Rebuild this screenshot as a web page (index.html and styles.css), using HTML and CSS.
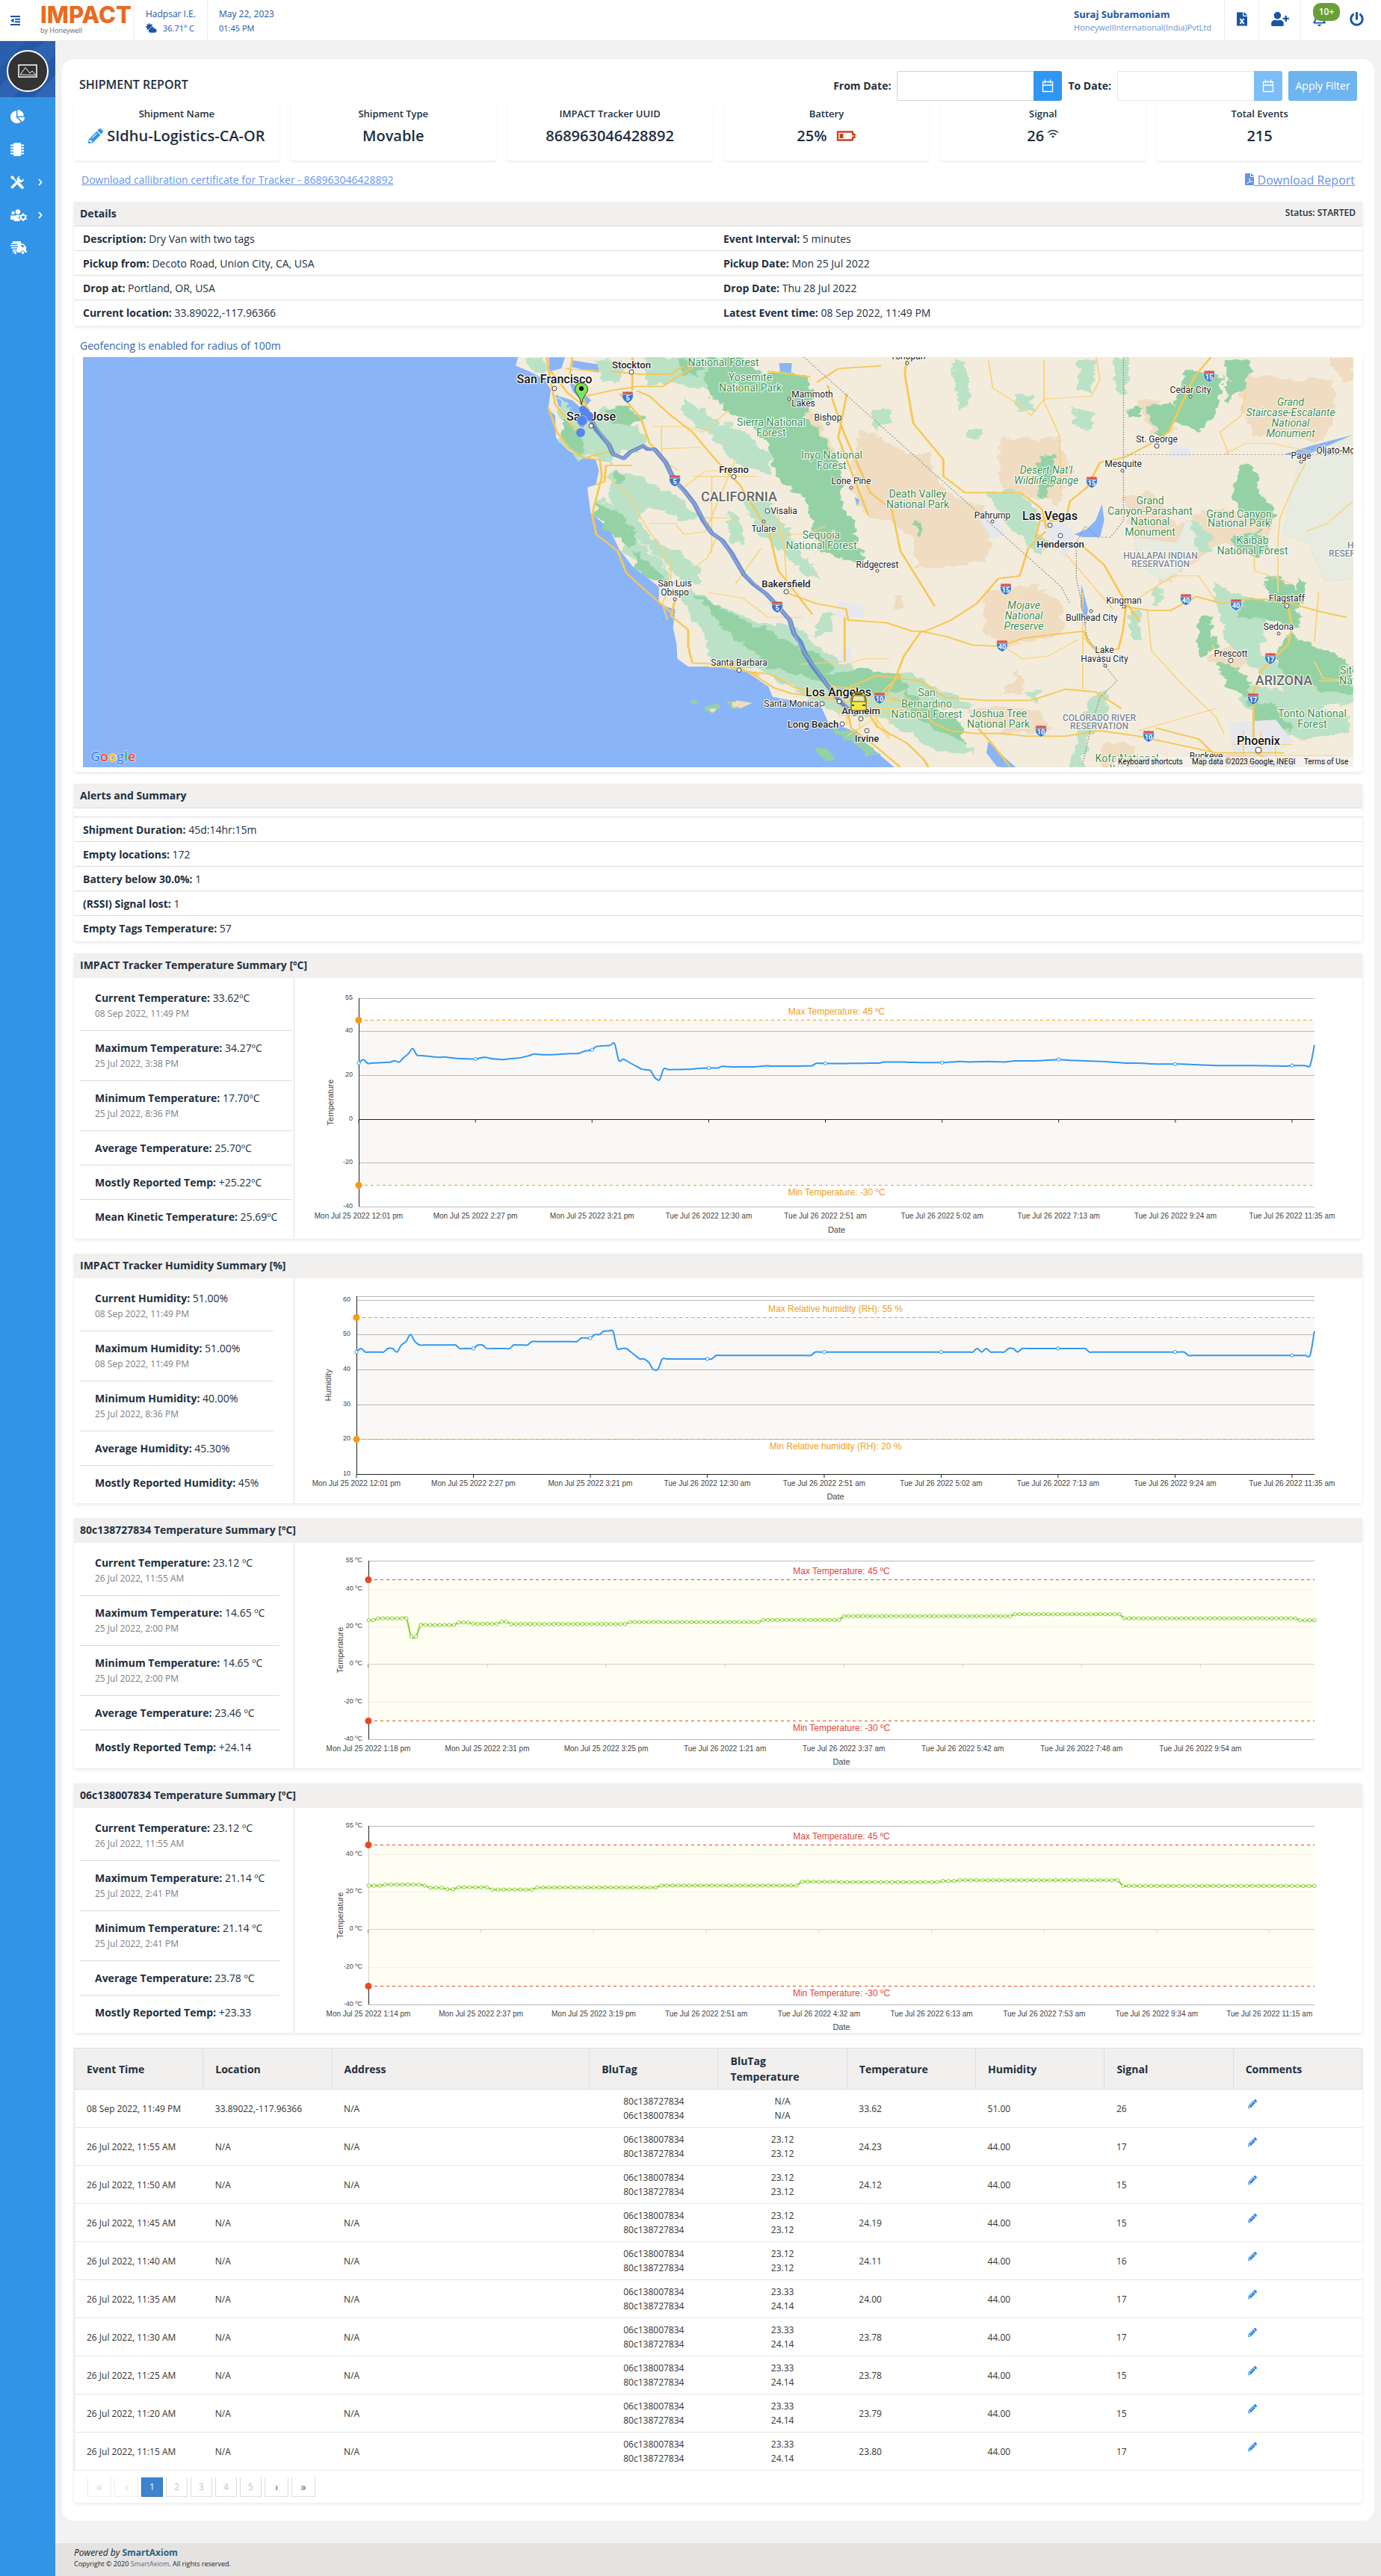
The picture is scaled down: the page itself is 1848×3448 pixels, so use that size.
FILE: index.html
```html
<!DOCTYPE html>
<html lang="en">
<head>
<meta charset="utf-8">
<meta name="viewport" content="width=device-width, initial-scale=1">
<title>Shipment Report</title>
<link rel="stylesheet" href="styles.css">
</head>
<body>
<svg class="sprite" aria-hidden="true">
  <symbol id="i-pencil" viewBox="0 0 512 512"><path d="M497.9 142.1l-46.1 46.1c-4.7 4.7-12.3 4.7-17 0l-111-111c-4.7-4.7-4.7-12.3 0-17l46.1-46.1c18.7-18.7 49.1-18.7 67.9 0l60.1 60.1c18.8 18.7 18.8 49.1 0 67.9zM284.2 99.8L21.6 362.4.4 483.9c-2.9 16.4 11.4 30.6 27.8 27.8l121.5-21.3 262.6-262.6c4.7-4.7 4.7-12.3 0-17l-111-111c-4.8-4.7-12.4-4.7-17.1 0zM124.1 339.9c-5.5-5.5-5.5-14.3 0-19.8l154-154c5.5-5.5 14.3-5.5 19.8 0s5.5 14.3 0 19.8l-154 154c-5.5 5.5-14.3 5.5-19.8 0zM88 424h48v36.3l-64.5 11.3-31.1-31.1L51.7 376H88v48z"/></symbol>
  <symbol id="i-file" viewBox="0 0 384 512"><path d="M224 136V0H24C10.700 0 0 10.700 0 24v464c0 13.300 10.700 24 24 24h336c13.300 0 24-10.700 24-24V160H248c-13.200 0-24-10.800-24-24zM384 121.900v6.100H256V0h6.100c6.400 0 12.500 2.500 17 7l97.900 98c4.500 4.500 7 10.600 7 16.900z"/></symbol>
  <symbol id="i-calendar" viewBox="0 0 16 18"><path d="M1.500 3.500h13v13h-13zM1.500 8h13M4.500 1v4M11.500 1v4" fill="none" stroke="currentColor" stroke-width="1.300" stroke-linecap="round" stroke-linejoin="round"/></symbol>
  <symbol id="i-chevron" viewBox="0 0 6 10"><path d="M1 1l3.500 4L1 9" fill="none" stroke="currentColor" stroke-width="1.800"/></symbol>
  <symbol id="i-shield" viewBox="0 0 16 17"><path d="M2 1q3 1 6 0q3 1 6 0q1 2 1.500 4h-15Q1 3 2 1z" fill="#d5544f"/><path d="M.5 5h15q.5 8-7.500 11.500Q0 13 .5 5z" fill="#3c78c8" stroke="#fff" stroke-width=".6"/></symbol>
</svg>

<header class="topbar">
  <button class="menu-btn" aria-label="Toggle menu">
    <svg width="13" height="13" viewBox="0 0 13 13"><path d="M0 1h13M6 4.700h7M6 8.300h7M0 12h13" stroke="#1a56a8" stroke-width="2"/><path d="M4.500 3.500v6L0 6.500z" fill="#1a56a8"/></svg>
  </button>
  <a class="logo" href="#"><span class="logo-name">IMPACT</span><span class="logo-by">by Honeywell</span></a>
  <div class="top-cell weather">
    <div>Hadpsar I.E.</div>
    <div class="small"><svg class="sun" width="15" height="13" viewBox="0 0 15 13"><circle cx="5" cy="5" r="3.500" fill="#1a56a8"/><path d="M5 0v10M0 5h10M1.500 1.500l7 7M8.500 1.500l-7 7" stroke="#1a56a8" stroke-width="1.300"/><path d="M6 13a3 3 0 0 1-.5-5.800 3.300 3.300 0 0 1 6.200-.3A3 3 0 0 1 12 13z" fill="#1a56a8" stroke="#fff" stroke-width=".6"/></svg>36.71º C</div>
  </div>
  <div class="top-cell date">
    <div>May 22, 2023</div>
    <div class="small">01:45 PM</div>
  </div>
  <div class="user">
    <div class="user-name">Suraj Subramoniam</div>
    <div class="user-org">HoneywellInternational(India)PvtLtd</div>
  </div>
  <a class="top-icon" href="#" aria-label="Export to Excel"><svg width="14" height="19" viewBox="0 0 384 512"><use href="#i-file"/><path d="M120 240l140 190M260 240L120 430" stroke="#fff" stroke-width="50"/></svg></a>
  <a class="top-icon wide" href="#" aria-label="Add user"><svg width="24" height="19" viewBox="0 0 640 512"><path d="M624 208h-64v-64c0-8.800-7.200-16-16-16h-32c-8.800 0-16 7.200-16 16v64h-64c-8.800 0-16 7.200-16 16v32c0 8.800 7.200 16 16 16h64v64c0 8.800 7.200 16 16 16h32c8.800 0 16-7.200 16-16v-64h64c8.800 0 16-7.200 16-16v-32c0-8.800-7.200-16-16-16zm-400 48c70.700 0 128-57.300 128-128S294.700 0 224 0 96 57.300 96 128s57.300 128 128 128zm89.600 32h-16.700c-22.200 10.200-46.900 16-72.900 16s-50.600-5.800-72.900-16h-16.700C60.200 288 0 348.200 0 422.400V464c0 26.500 21.500 48 48 48h352c26.500 0 48-21.500 48-48v-41.600c0-74.200-60.200-134.400-134.400-134.400z"/></svg></a>
  <a class="top-icon bell" href="#" aria-label="Notifications"><svg width="17" height="19" viewBox="0 0 448 512"><path d="M439.390 362.290c-19.320-20.760-55.470-51.990-55.470-154.290 0-77.700-54.480-139.900-127.940-155.160V32c0-17.670-14.320-32-31.980-32s-31.980 14.330-31.980 32v20.840C118.560 68.100 64.080 130.300 64.080 208c0 102.300-36.150 133.530-55.470 154.290-6 6.450-8.660 14.160-8.610 21.710.11 16.400 12.980 32 32.100 32h383.800c19.120 0 32-15.600 32.100-32 .05-7.550-2.610-15.270-8.610-21.710zM67.530 368c21.220-27.970 44.420-74.330 44.530-159.420 0-.2-.06-.38-.06-.58 0-61.860 50.140-112 112-112s112 50.140 112 112c0 .2-.06.38-.06.58.11 85.100 23.310 131.460 44.530 159.420H67.530zM224 512c35.320 0 63.970-28.650 63.970-64H160.030c0 35.350 28.650 64 63.970 64z"/></svg><span class="badge">10+</span></a>
  <a class="top-icon power" href="#" aria-label="Log out"><svg width="19" height="19" viewBox="0 0 512 512"><path d="M400 54.100c63 45 104 118.600 104 201.900 0 136.800-110.800 247.700-247.500 248C120 504.300 8.200 393 8 256.400 7.900 173.100 48.900 99.300 111.800 54.200c11.700-8.300 28-4.800 35 7.700L162.600 90c5.900 10.500 3.100 23.800-6.600 31-41.500 30.800-68 79.600-68 134.900-.1 92.300 74.500 168.100 168 168.100 91.600 0 168.600-74.200 168-169.100-.3-51.800-24.700-101.800-68.100-134-9.700-7.200-12.400-20.500-6.500-30.900l15.800-28.100c7-12.400 23.200-16.100 34.800-7.800zM296 264V24c0-13.300-10.700-24-24-24h-32c-13.300 0-24 10.700-24 24v240c0 13.300 10.700 24 24 24h32c13.300 0 24-10.700 24-24z"/></svg></a>
</header>

<div class="shell">
  <nav class="sidebar" aria-label="Main">
    <div class="avatar-box"><div class="avatar">
      <svg width="26" height="18" viewBox="0 0 26 18" fill="none" stroke="#fff"><path d="M1 1h24v16H1z" stroke-width="1.500"/><path d="M3 14l7-9.500 6 7.500 3-3 5 5.500z"/></svg>
    </div></div>
    <a class="side-link" href="#" aria-label="Dashboard"><svg width="19" height="18" viewBox="0 0 544 512"><path d="M527.790 288H290.500l158.030 158.030c6.040 6.040 15.980 6.530 22.190.68 38.700-36.460 65.320-85.610 73.130-140.860 1.340-9.460-6.510-17.850-16.060-17.850zm-15.830-64.800C503.720 103.740 408.260 8.280 288.800.04 279.680-.59 272 7.100 272 16.240V240h223.770c9.140 0 16.820-7.680 16.190-16.800zM224 288V50.710c0-9.550-8.390-17.400-17.840-16.060C86.990 51.490-4.100 155.600.14 280.370 4.500 408.510 114.830 513.590 243.030 511.980c50.400-.63 96.970-16.870 135.260-44.030 7.900-5.600 8.420-17.230 1.570-24.080L224 288z"/></svg></a>
    <a class="side-link" href="#" aria-label="Devices"><svg width="18" height="18" viewBox="0 0 18 18"><rect x="4" y="0" width="10" height="18" rx="1.500"/><path d="M0 3.500h18M0 7.200h18M0 10.800h18M0 14.500h18" stroke="#fff" stroke-width="2"/></svg></a>
    <a class="side-link" href="#" aria-label="Tools"><svg width="18" height="18" viewBox="0 0 18 18"><path d="M2.500 15.500L12 6" stroke="#fff" stroke-width="3.600" stroke-linecap="round"/><path d="M17.600 4.200A4.500 4.500 0 1 1 13 .4L11.300 3l.7 3 3 .6z"/><path d="M0 2l2.200-2L5 2.300l.3 1.700 4.200 4.200-1.300 1.300L4 5.200 2.300 5z"/><path d="M11.500 11.500l4.300 4.300" stroke="#fff" stroke-width="4" stroke-linecap="round"/></svg><svg class="chev" width="6" height="10"><use href="#i-chevron"/></svg></a>
    <a class="side-link" href="#" aria-label="Users"><svg width="22" height="16" viewBox="0 0 22 16"><circle cx="3.500" cy="5" r="2.200"/><circle cx="10" cy="3.500" r="3.300"/><path d="M0 8.500h5.500L4 14H0zM4.500 16v-3.500C4.500 9 7 7.800 9 7.800h3l-1 4 2 4.200z"/><circle cx="17" cy="10.800" r="3.200" fill="none" stroke="#fff" stroke-width="2.200"/><path d="M17 5.500v2M17 14v2M12.300 8.200l1.700 1M20 12.500l1.700 1M21.700 8.200l-1.700 1M14 12.500l-1.700 1" stroke="#fff" stroke-width="1.800"/></svg><svg class="chev" width="6" height="10"><use href="#i-chevron"/></svg></a>
    <a class="side-link" href="#" aria-label="Shipments"><svg width="22" height="18" viewBox="0 0 22 18"><path d="M3 0h11v3h3l4 4.500V13h1v2H3v-4h6V9.500H1V8h9V6.500H0V5h9V3.500H1V2h2z"/><path d="M14.500 4.500v3.300h4.500l-2.600-3.300z" fill="#3294e6"/><circle cx="6.500" cy="15" r="2.400" stroke="#3294e6"/><circle cx="16.500" cy="15" r="2.400" stroke="#3294e6"/></svg></a>
  </nav>

  <div class="content">
    <main class="panel">
      <form class="filters" onsubmit="return false">
        <h1>SHIPMENT REPORT</h1>
        <label for="from">From Date:</label>
        <div class="date-field"><input id="from" type="text"><button type="button" aria-label="Choose from date"><svg width="16" height="18"><use href="#i-calendar"/></svg></button></div>
        <label for="to">To Date:</label>
        <div class="date-field disabled"><input id="to" type="text" disabled><button type="button" aria-label="Choose to date" disabled><svg width="16" height="18"><use href="#i-calendar"/></svg></button></div>
        <button class="apply" type="submit" disabled>Apply Filter</button>
      </form>

      <section class="stats">
        <div class="stat"><h2>Shipment Name</h2><p><svg class="edit-lg" width="20" height="20"><use href="#i-pencil"/></svg>SIdhu-Logistics-CA-OR</p></div>
        <div class="stat"><h2>Shipment Type</h2><p>Movable</p></div>
        <div class="stat"><h2>IMPACT Tracker UUID</h2><p>868963046428892</p></div>
        <div class="stat"><h2>Battery</h2><p>25%<svg class="battery" width="26" height="14" viewBox="0 0 26 14"><path d="M2 1.500h20v3.500h2.500v4H22v3.500H2z" fill="none" stroke="#c9411f" stroke-width="2.400" stroke-linejoin="round"/><rect x="4.500" y="4" width="5" height="6" fill="#c9411f"/></svg></p></div>
        <div class="stat"><h2>Signal</h2><p>26<svg class="wifi" width="16" height="12" viewBox="0 0 16 12"><path d="M1 4.500q7-6 14 0M3.800 7.300q4.200-3.500 8.400 0" fill="none" stroke="#212f3f" stroke-width="1.500"/><circle cx="8" cy="10" r="1.400" fill="#212f3f"/></svg></p></div>
        <div class="stat"><h2>Total Events</h2><p>215</p></div>
      </section>

      <div class="links">
        <a href="#">Download callibration certificate for Tracker - 868963046428892</a>
        <a class="report" href="#"><svg width="12" height="16" viewBox="0 0 384 512"><use href="#i-file"/><path d="M90 430C200 370 210 300 190 220c0 90 50 130 120 140-80-10-150 20-220 70z" fill="none" stroke="#fff" stroke-width="26"/></svg> Download Report</a>
      </div>

      <section class="card">
        <h2 class="card-head">Details <span class="status">Status: STARTED</span></h2>
        <div class="detail-row"><p><b>Description:</b> Dry Van with two tags</p><p><b>Event Interval:</b> 5 minutes</p></div>
        <div class="detail-row"><p><b>Pickup from:</b> Decoto Road, Union City, CA, USA</p><p><b>Pickup Date:</b> Mon 25 Jul 2022</p></div>
        <div class="detail-row"><p><b>Drop at:</b> Portland, OR, USA</p><p><b>Drop Date:</b> Thu 28 Jul 2022</p></div>
        <div class="detail-row"><p><b>Current location:</b> 33.89022,-117.96366</p><p><b>Latest Event time:</b> 08 Sep 2022, 11:49 PM</p></div>
      </section>

      <p class="geofence">Geofencing is enabled for radius of 100m</p>
      <section class="card map-card">
        <svg class="map" viewBox="0 0 1700 549" role="img" aria-label="Route map">
          <defs><filter id="terrain" x="0" y="0" width="100%" height="100%"><feTurbulence type="fractalNoise" baseFrequency="0.035" numOctaves="3" seed="4"/><feDisplacementMap in="SourceGraphic" scale="34" xChannelSelector="R" yChannelSelector="G"/></filter></defs>
          <rect width="1700" height="549" fill="#8ab4f8"/>
          <g transform="translate(-11 -18) scale(.574 .37)">
            <path fill="#f3ecdd" d="M1035 40L1028 80 1060 100 1095 130 1110 165 1104 235 1120 260 1122 340 1150 385 1180 412 1215 420 1222 460 1215 510 1195 520 1203 615 1245 665 1270 745 1300 805 1350 865 1362 880 1362 940 1385 955 1400 960 1395 1030 1403 1085 1405 1140 1430 1168 1500 1168 1567 1188 1617 1240 1627 1278 1687 1295 1739 1310 1757 1370 1807 1395 1852 1455 1920 1545H3000V40z"/>
            <g fill="#8ab4f8"><path d="M1105 49h38l-8 40-28 12zM1120 185l40 20 30 40-12 40-50-60zM1160 60l80 20-20 25-60-20zM1150 130l24 30 30 45-12 20-30-50z"/></g>
            <!-- reserves, bases and desert parks -->
            <g fill="#efdcc1" filter="url(#terrain)">
              <path d="M1830 300l60 50 50 50h58v70l60 90 60 30 20 80-20 120-90 20h-70v-100l-50-60-60-20-40-110z"/>
              <path d="M2155 342h140l30 120-30 120-60-30-80-30zM2120 900l90-20 30-10 60 80v100l-80 30-60 20-40-60zM2200 1180l20 90-60 0zM2080 1330l60-20 110 20 30 70-110 10-60-40z"/>
              <path d="M2720 110l120 20 80 0 20 80-30 140-160-20-30-90zM2440 560l70-20 60 120 60-60 60 0 100 60-20 100-60-30-50 0-80 90-60-10-40-80zM2480 210l50-10 40 120-60 10zM2700 1080l60 30-40 70-80-40zM2780 1240l80 60 40 80-40 60-80-80zM1650 180l60 40 60 160 20 180-30-20-60-160-40-90zM2390 1450l80 0 0 90-80 0zM2520 820l30-30 20 60-40 20z"/>
              <path d="M2930 50h52v80l-30 10zM2125 600l20 80-20 80-10-20zM1910 910l20 0 0 50-20 0zM2620 1520l80-40 60 10 20 55h-140z"/>
            </g>
            <g fill="#e8ebe0" stroke="#cfdcd2">
              <path d="M2850 450l60-90 75-20v510l-70 10-40-140-60-30zM2470 700l100 20 20-80 40 10-10 120-80 90-60-60z"/>
            </g>
            <!-- forest and park land -->
            <g fill="#bbe2c6" filter="url(#terrain)">
              <path d="M1050 49h45l12 70-40-28-20-20zM1125 185l30 60 30 60 50-80 60 40 40 90-20 40-40-10-30 50-40-40-30 30-40-60 2-80z"/>
              <path d="M1215 60h60v80h-40zM1330 49h180l60 40v180l-40-40-50-60-90-30-60 20zM1420 200l60 60 80 60 60 90v60l-80-40-60-100-60-60z"/>
              <path d="M1250 460l50 0 60 60 60 50 30 60-30 10-70-50-40 20 30 90 70 60 50 60 0 60-50-30-60-90-60-90-50-110z"/>
              <path d="M1222 560l50 50 40 100 60 90 30 70-20 10-60-70-40-60-25-80-38-50z"/>
              <path d="M1400 890l40 0 60 60 80 50 90 40 60 60 80 60 60 60 90 20-40 60-100-20-60-20-60-60-110-20-80-20-30-10-6-90z"/>
              <path d="M1560 560l60 10 40 100 50 120 30 60-30-10-60-90-60-60zM1595 1165l160 25 170 0 60 90 40 60 70 140h-90l-60-70-80-60-90-20-60-40z"/>
              <path d="M1520 600l30 20 10 110-30-20zM1640 1010l50 20 40 80-40 20-60-50zM1890 1200l60-10 60 60 90 50-20 30-100-20z"/>
              <path d="M2130 540l60-10 60 70-10 60 30 70-20 30-50-60-40-70zM2050 60l20 0 15 80 0 70-20 40-12-90zM2190 180l50 0-10 60-30 10zM2080 310l40-5-10 35-30 0zM2320 230l60 20-10 60-30 0zM2340 60l40 0-10 120-30-20zM2420 49h40l-10 130-20 0z"/>
              <path d="M2370 1270l40-20-10 100-40 80-10 110h-30l20-140zM2460 960l25 0 0 120-25 0zM2520 870l20 20-10 60-20 0zM1855 240l50-5-10 60-30 20zM2225 1260l30-10-10 60zM1740 980l30 0-10 60-30 20z"/>
              <path d="M2600 640l40 30 10 80-30 0zM2650 860l80 60 60 60-30 130 50 60 180 60v60l-130 40-50-90-60-60-60-90zM2750 1230l80 40 140 80v60l-120 20-80-60-60-90z"/>
            </g>
            <g fill="#94d2a5" filter="url(#terrain)">
              <path d="M1480 49l80 0 50 60 40-20 60 40 10 60-20 70 40 60 30 90 20 80 0 90 30 100 20 110-40-10-60-20-20-110-20-90-50-60-30-90-20-80-50-60-60-60-30-80z"/>
              <path d="M1135 270l20 10 30 60 5 60-20 5-35-65zM1218 570l50 40 45 90-20 40-20-20-60-95zM1300 745l45 60 45 60-15 10-65-60zM1440 900l60 50 70 60 60 30 40 40 70 50 30 40-20 50-120-40-60-80-60-70z"/>
              <path d="M1240 240l50-20 30 50-20 30-50-10zM1255 460l30 10-5 35-20-5zM1410 50l50 30-10 40-30-10zM1650 300l20 60 30 40-30 0zM1610 300l40 80 20 90-30-20z"/>
              <path d="M1740 1205l80-30 110 20 10 60-60 10-100-10zM1930 1250l60 60 70 60 20 80-60-40-80-80zM1740 1375l80 30 60 90-30-10z"/>
              <path d="M2240 470l20-70 25-5-5 120-20 50-15-20zM1960 640l10 0 5 40-5 20-10-10z"/>
              <path d="M2500 220l60-10 10 60-30 80-30-60zM2600 90l80 30-20 140-40 60-60-40 10-90zM2685 60h60l-20 110-40 40zM2455 240l30-10 0 40-30 0z"/>
              <path d="M2720 440l30 0 10 90 40 90-20 60-60-60-20-80zM2700 700l60-20 30 60-30 30-50-20z"/>
              <path d="M2775 850l40-5 40 60 0 120-60-20-90-20 30-60 50 0zM2620 980l30 0 10 110-30 50-20-40zM2830 1050l90 60 60 60v100l-70-10-90-60-20-60zM2665 1150l50 20 30 60-10 50-50-40zM2740 1290l60 20 40 80-30 20-60-60zM2850 850l20 10-5 80-20-20z"/>
            </g>
            <g fill="#e6e8ee"><path d="M2110 640l40-10 20 60-30 20zM2240 640l60-10 30 60-20 90-30-60zM1780 930l60 20 0 40-60 0zM2690 1370l110-10 40 80-60 60-80-20zM1790 1100l20 0 0 60-30 0zM2560 360l40 20 0 30-50 0z"/></g>
            <g fill="#8ab4f8"><path d="M2395 580l5 60-10 60-40 0-20-10 30-20 20-30zM2347 870l15 90-5 60-12-70zM1642 70l30 0-2 36-26-10zM1818 555l12 10-6 24zM2130 1440l40 60 30 40-50-10-25-50zM2820 400l60-30 100-40-60 40-60 40z"/></g>
            <g fill="#94d2a5"><path d="M1433 1295l10-8 12 14-10 4zM1468 1315l30-15 8 15-20 22-18-10zM1518 1287l12 8 38-2-10 25-25 4zM1725 1460l30 5 18 40-20 5-20-25z"/><path fill="#efdcc1" d="M1478 1322l14-4 4 8-10 10zM1532 1296l18 0 0 16-16 4zM1540 1290l40 10-30 20z"/></g>
            <!-- minor roads -->
            <g fill="none" stroke="#fbd277" stroke-width="3">
              <path d="M1240 480l50 70 30 80 20 50 30 70 20 50 0 60-20 80 12 60"/>
              <path d="M1340 650l60 0 20 40 50-10 70-260M1395 810l50 0 30-35 20-70M1420 520l50-60 70 0M1345 300l80 0 40 20 60-80M1370 380l90-5M1368 300l0 120 40 40M1485 480v280M1440 480h150M1460 630h90M1640 620l15 130 5 130"/>
              <path d="M2130 60l10 100 60 60 30 40 30-60 110-10 20-60-10-90M2260 60l0 150 35 120 5 200M1620 690h80l50-30M1600 740l-60 130M1477 900l80 20 60 70h80M1790 1150l-100 10"/>
              <path d="M2310 760l110 200M2500 960l10 150 70 120 80 120 20 60M2440 960l60-60 60-60 60 0 40 90M2870 430l-30 90-30 110-5 80 0 190M2870 680l50-30 60-80M2680 400l50-40 60 0 90 30M2730 170l-10 90-50 60 20 80M2650 1090l20 40M2350 1250v-350M2350 1060l40 70M2160 1090l50 50 60-10 70-60M1900 1140h-60l-60 30M2480 1400l180-80M2900 1220l80 0M2900 900l-10 180M2890 1150l20 60 60 10M2750 760v60l90 50"/>
              <path d="M1750 1215l70 100 100 30M1800 1420l60-60 40 70M1770 1240l60 10 30 90 40 80M1760 1290h190M1770 1320h170M1800 1260v120M1830 1260v140M1870 1260v120M1900 1270v110M1780 1345h140M2680 1490h260M2700 1450h140M2725 1400v130M2765 1400v130M2800 1420v110M1950 1290l-30-30M1930 1190l-60 90"/>
            </g>
            <!-- highways -->
            <g fill="none" stroke="#f8c754" stroke-width="5" stroke-linejoin="round">
              <path d="M1100 49l10 90 10 80 40 80 30 20M1160 49l-5 60 30 90 20 70 10 50M1110 100l40 80 50 60M1145 90l80 10M1190 190l60-20 60-15 60 0 40-40 60-60M1250 100l60 10 80 0 30-30M1300 49v120M1310 170l30 20 50 70 50 60 60 110 50 80 40 100 30 80 20 130 60 120 20 40"/>
              <path d="M1270 180l50 90 20 90 20 30M1104 230l20 90 30 60 30 30 40 10 5 60-15 90-8 50 10 70 50 60 20 80 50 70 60 80"/>
              <path d="M1195 410l55-20M1215 510l20-10 4-60 60 0M1400 925l-10 60 40 50 0 60 10 60 60 5 60 25 60 10 60 50 90 30 60 10 40 100 70 60 40 60 30 80"/>
              <path d="M1658 900l70 40 70 20 5 40 90 10 60 30 30 0 60-40 60-60 50-90 50-10 20-100 40-60"/>
              <path d="M1973 1040l60 20 60 30 60 5 60-30 80-15 60-10 10 40 20 25h50l10-60 10-120"/>
              <path d="M2445 950l60 15 50 0 60-50 60 25 50-15 50 0 60 15 70 30 60 20"/>
              <path d="M1973 1040l-40 90-20 80-20 60-60 10M1755 150l40 180 60 210 50 60 20 150 80 200M1800 180l-20 160 30 120 40 160M1715 120l-100-20M1730 140l50-50 100-10"/>
              <path d="M1940 49l-5 60 20 180 70 130 0 60 50 60 130 0 50 60 10 70"/>
              <path d="M2310 640l10-70 40-50 30-90 60-20 60-50 40-40 60-200 60-110M2310 640l-60 0-10 60 40 30 60-10 60 80 40 110 40 90"/>
              <path d="M1900 1280l60 30 40 60 40 30 60 10 60 0 60 10 90 0 80-20 90 20 60 20 60 20 60 20h160M2660 1490l-40-60-100-40"/>
              <path d="M2748 1440l0-180 20-80 60-90 10-60-10-90M2750 1480l60 40M1780 1260l90-60 100 20 60 60 90 10 110 0 80-40 70 10 60 60M1795 990v160M1477 1170l60 0 60 30"/>
              <path d="M2100 1380l40 70 40 80M1760 1260l40 60 10 70 60 70 60 80M1570 1185l60 60 40 20 100 20"/>
            </g>
            <g fill="none" stroke="#8c8c8c" stroke-width="2.500" stroke-dasharray="4 5"><path d="M1700 49L2300 880l20 60M2445 49V401H2985M2445 401V640l-30 60-30 0-30-40-20 60 0 130 10 70 15 140 40 100 30 60-40 60-20 100-20 140"/></g>
            <g fill="none" stroke-linejoin="round"><path stroke="#4674d2" stroke-opacity=".75" stroke-width="12" d="M1180 300L1200 262 1215 310 1245 365 1255 400 1280 415 1295 392 1325 370 1335 382 1352 382 1378 430 1398 495 1420 530 1445 580 1465 640 1485 685 1510 712 1530 755 1560 835 1582 870 1612 905 1642 955 1667 1000 1677 1050 1692 1080 1702 1120 1722 1170 1757 1240 1787 1300 1822 1345"/><path stroke="#8fa5cf" stroke-width="4" d="M1200 262L1245 365 1255 400 1280 415 1295 392 1325 370 1352 382 1378 430 1398 495 1445 580 1485 685 1510 712 1560 835 1612 905 1642 955 1667 1000 1677 1050 1702 1120 1757 1240 1822 1345"/></g>
          </g>
          <g class="dots"><circle cx="734" cy="20" r="3"/><circle cx="631" cy="42" r="3"/><circle cx="680" cy="92" r="3"/><circle cx="871" cy="160" r="3"/><circle cx="792" cy="324" r="2"/><circle cx="878" cy="419" r="3"/><circle cx="945" cy="56" r="2"/><circle cx="997" cy="89" r="2"/><circle cx="1028" cy="175" r="2"/><circle cx="916" cy="206" r="3"/><circle cx="911" cy="220" r="2"/><circle cx="1217" cy="220" r="2"/><circle cx="1294" cy="225" r="3"/><circle cx="1308" cy="239" r="3"/><circle cx="1063" cy="286" r="2"/><circle cx="941" cy="314" r="3"/><circle cx="1393" cy="334" r="2"/><circle cx="1349" cy="340" r="2"/><circle cx="1611" cy="333" r="3"/><circle cx="1600" cy="370" r="2"/><circle cx="1536" cy="406" r="3"/><circle cx="1368" cy="413" r="2"/><circle cx="1482" cy="53" r="2"/><circle cx="1437" cy="119" r="3"/><circle cx="1391" cy="152" r="2"/><circle cx="1630" cy="140" r="2"/><circle cx="1103" cy="8" r="2"/><circle cx="1012" cy="461" r="3"/><circle cx="989" cy="464" r="3"/><circle cx="1041" cy="484" r="3"/><circle cx="1016" cy="491" r="3"/><circle cx="1049" cy="500" r="3"/><circle cx="1573" cy="526" r="4"/></g>
          <g class="shields">
            <g><use href="#i-shield" x="721" y="45" width="16" height="17"/><text x="729" y="58">5</text></g>
            <g><use href="#i-shield" x="784" y="157" width="16" height="17"/><text x="792" y="170">5</text></g>
            <g><use href="#i-shield" x="921" y="326" width="16" height="17"/><text x="929" y="339">5</text></g>
            <g><use href="#i-shield" x="1499" y="17" width="16" height="17"/><text x="1507" y="30">15</text></g>
            <g><use href="#i-shield" x="1342" y="159" width="16" height="17"/><text x="1350" y="172">15</text></g>
            <g><use href="#i-shield" x="1227" y="302" width="16" height="17"/><text x="1235" y="315">15</text></g>
            <g><use href="#i-shield" x="1468" y="316" width="16" height="17"/><text x="1476" y="329">40</text></g>
            <g><use href="#i-shield" x="1535" y="323" width="16" height="17"/><text x="1543" y="336">40</text></g>
            <g><use href="#i-shield" x="1222" y="378" width="16" height="17"/><text x="1230" y="391">40</text></g>
            <g><use href="#i-shield" x="1581" y="395" width="16" height="17"/><text x="1589" y="408">17</text></g>
            <g><use href="#i-shield" x="1558" y="449" width="16" height="17"/><text x="1566" y="462">17</text></g>
            <g><use href="#i-shield" x="1058" y="448" width="16" height="17"/><text x="1066" y="461">10</text></g>
            <g><use href="#i-shield" x="1274" y="492" width="16" height="17"/><text x="1282" y="505">10</text></g>
            <g><use href="#i-shield" x="1418" y="499" width="16" height="17"/><text x="1426" y="512">10</text></g>
          </g>
          <g class="park"><text x="857" y="12">National Forest</text><text x="893" y="32">Yosemite</text><text x="893" y="46">National Park</text><text x="921" y="92">Sierra National</text><text x="921" y="106">Forest</text><text x="1002" y="136">Inyo National</text><text x="1002" y="150">Forest</text><text x="1117" y="188">Death Valley</text><text x="1117" y="202">National Park</text><text x="988" y="243">Sequoia</text><text x="988" y="257">National Forest</text><text x="1428" y="197">Grand</text><text x="1428" y="211">Canyon-Parashant</text><text x="1428" y="225">National</text><text x="1428" y="239">Monument</text><text x="1547" y="215">Grand Canyon</text><text x="1547" y="227">National Park</text><text x="1565" y="250">Kaibab</text><text x="1565" y="264">National Forest</text><text x="1129" y="454">San</text><text x="1129" y="469">Bernardino</text><text x="1129" y="483">National Forest</text><text x="1225" y="482">Joshua Tree</text><text x="1225" y="496">National Park</text><text x="1645" y="482">Tonto National</text><text x="1645" y="496">Forest</text><text x="1397" y="542">Kofa National</text><text x="1397" y="556">Wildlife</text><text x="1694" y="424">Sitg</text><text x="1694" y="438">Natl</text>
            <g class="it"><text x="1289" y="156">Desert Nat'l</text><text x="1289" y="170">Wildlife Range</text><text x="1259" y="337">Mojave</text><text x="1259" y="351">National</text><text x="1259" y="365">Preserve</text><text x="1616" y="65">Grand</text><text x="1616" y="79">Staircase-Escalante</text><text x="1616" y="93">National</text><text x="1616" y="107">Monument</text></g></g>
          <g class="region"><text x="1442" y="270">HUALAPAI INDIAN</text><text x="1442" y="281">RESERVATION</text><text x="1360" y="487">COLORADO RIVER</text><text x="1360" y="498">RESERVATION</text><text x="1706" y="256">HOPI</text><text x="1706" y="267">RESERVATION</text><text x="1590" y="549">GILA RIVER</text></g>
          <g class="state"><text x="878" y="193">CALIFORNIA</text><text x="1607" y="439">ARIZONA</text></g>
          <g class="town"><text x="792" y="307">San Luis</text><text x="792" y="319">Obispo</text><text x="878" y="413">Santa Barbara</text><text x="976" y="54">Mammoth</text><text x="964" y="66">Lakes</text><text x="997" y="85">Bishop</text><text x="1028" y="170">Lone Pine</text><text x="938" y="210">Visalia</text><text x="911" y="234">Tulare</text><text x="1217" y="216">Pahrump</text><text x="1063" y="282">Ridgecrest</text><text x="1393" y="330">Kingman</text><text x="1350" y="353">Bullhead City</text><text x="1611" y="327">Flagstaff</text><text x="1600" y="365">Sedona</text><text x="1536" y="401">Prescott</text><text x="1367" y="396">Lake</text><text x="1367" y="408">Havasu City</text><text x="1482" y="48">Cedar City</text><text x="1437" y="114">St. George</text><text x="1392" y="147">Mesquite</text><text x="1630" y="136">Page</text><text x="1683" y="129">Oljato-Monu</text><text x="948" y="468">Santa Monica</text><text x="1503" y="538">Buckeye</text><text x="1104" y="3">Tonopah</text></g>
          <g class="city"><text x="734" y="15">Stockton</text><text x="871" y="155">Fresno</text><text x="1308" y="255">Henderson</text><text x="941" y="308">Bakersfield</text><text x="1041" y="478">Anaheim</text><text x="977" y="496">Long Beach</text><text x="1049" y="515">Irvine</text></g>
          <g class="metro"><text x="631" y="35">San Francisco</text><text x="680" y="85">San Jose</text><text x="1294" y="218">Las Vegas</text><text x="1011" y="454">Los Angeles</text><text x="1573" y="519">Phoenix</text></g>
          <g fill="#5585ee"><circle cx="669" cy="70" r="5"/><circle cx="672" cy="74" r="6"/><circle cx="677" cy="79" r="6"/><circle cx="668" cy="85" r="7" stroke="#a9c3f7"/><circle cx="666" cy="101" r="6"/></g>
          <path d="M667 64q-1-9-6-15a8.500 8.500 0 1 1 12 0q-5 6-6 15z" fill="#7ee45a" stroke="#2c4a1e"/><circle cx="667" cy="42" r="3"/>
          <g stroke="#4c4a22"><path d="M1030 450q8-3 16 0l2 8v15h-20v-15z" fill="#f5e642"/><path d="M1031 453h14l2 8h-18z" fill="#e9e6b0"/><path d="M1033 451h10M1029 466h3M1043 466h4" stroke-width="2"/></g>
          <text class="glogo" x="10" y="541"><tspan fill="#4285f4">G</tspan><tspan fill="#ea4335">o</tspan><tspan fill="#fbbc05">o</tspan><tspan fill="#4285f4">g</tspan><tspan fill="#34a853">l</tspan><tspan fill="#ea4335">e</tspan></text>
          <rect x="1380" y="535" width="320" height="14" fill="#f5f5f5" fill-opacity=".7"/>
          <g class="attrib"><text x="1385" y="545">Keyboard shortcuts</text><text x="1484" y="545">Map data ©2023 Google, INEGI</text><a href="#"><text x="1634" y="545">Terms of Use</text></a></g>
        </svg>
      </section>

      <section class="card">
        <h2 class="card-head">Alerts and Summary</h2>
        <div class="spacer-row"></div>
        <div class="detail-row"><p><b>Shipment Duration:</b> 45d:14hr:15m</p></div>
        <div class="detail-row"><p><b>Empty locations:</b> 172</p></div>
        <div class="detail-row"><p><b>Battery below 30.0%:</b> 1</p></div>
        <div class="detail-row"><p><b>(RSSI) Signal lost:</b> 1</p></div>
        <div class="detail-row"><p><b>Empty Tags Temperature:</b> 57</p></div>
      </section>

      <section class="card summary">
        <h2 class="card-head plain">IMPACT Tracker Temperature Summary [ºC]</h2>
        <div class="summary-body">
          <div class="side-stats"><ul>
            <li><b>Current Temperature:</b> 33.62ºC<small>08 Sep 2022, 11:49 PM</small></li>
            <li><b>Maximum Temperature:</b> 34.27ºC<small>25 Jul 2022, 3:38 PM</small></li>
            <li><b>Minimum Temperature:</b> 17.70ºC<small>25 Jul 2022, 8:36 PM</small></li>
            <li><b>Average Temperature:</b> 25.70ºC</li>
            <li><b>Mostly Reported Temp:</b> +25.22ºC</li>
            <li><b>Mean Kinetic Temperature:</b> 25.69ºC</li>
          </ul></div>
          <svg class="chart" id="chart-temp" viewBox="0 1 1429 349" role="img" aria-label="Tracker temperature"></svg>
        </div>
      </section>

      <section class="card summary">
        <h2 class="card-head plain">IMPACT Tracker Humidity Summary [%]</h2>
        <div class="summary-body">
          <div class="side-stats"><ul>
            <li><b>Current Humidity:</b> 51.00%<small>08 Sep 2022, 11:49 PM</small></li>
            <li><b>Maximum Humidity:</b> 51.00%<small>08 Sep 2022, 11:49 PM</small></li>
            <li><b>Minimum Humidity:</b> 40.00%<small>25 Jul 2022, 8:36 PM</small></li>
            <li><b>Average Humidity:</b> 45.30%</li>
            <li><b>Mostly Reported Humidity:</b> 45%</li>
          </ul></div>
          <svg class="chart" id="chart-hum" viewBox="0 0 1429 301" role="img" aria-label="Tracker humidity"></svg>
        </div>
      </section>

      <section class="card summary">
        <h2 class="card-head plain">80c138727834 Temperature Summary [ºC]</h2>
        <div class="summary-body">
          <div class="side-stats"><ul>
            <li><b>Current Temperature:</b> 23.12 ºC<small>26 Jul 2022, 11:55 AM</small></li>
            <li><b>Maximum Temperature:</b> 14.65 ºC<small>25 Jul 2022, 2:00 PM</small></li>
            <li><b>Minimum Temperature:</b> 14.65 ºC<small>25 Jul 2022, 2:00 PM</small></li>
            <li><b>Average Temperature:</b> 23.46 ºC</li>
            <li><b>Mostly Reported Temp:</b> +24.14</li>
          </ul></div>
          <svg class="chart" id="chart-tag1" viewBox="0 0 1429 302" role="img" aria-label="Tag 80c138727834 temperature"></svg>
        </div>
      </section>

      <section class="card summary">
        <h2 class="card-head plain">06c138007834 Temperature Summary [ºC]</h2>
        <div class="summary-body">
          <div class="side-stats"><ul>
            <li><b>Current Temperature:</b> 23.12 ºC<small>26 Jul 2022, 11:55 AM</small></li>
            <li><b>Maximum Temperature:</b> 21.14 ºC<small>25 Jul 2022, 2:41 PM</small></li>
            <li><b>Minimum Temperature:</b> 21.14 ºC<small>25 Jul 2022, 2:41 PM</small></li>
            <li><b>Average Temperature:</b> 23.78 ºC</li>
            <li><b>Mostly Reported Temp:</b> +23.33</li>
          </ul></div>
          <svg class="chart" id="chart-tag2" viewBox="0 0 1429 301" role="img" aria-label="Tag 06c138007834 temperature"></svg>
        </div>
      </section>

      <section class="card events">
        <table>
          <colgroup><col><col><col class="wide"><col><col><col><col><col><col></colgroup>
          <thead><tr><th>Event Time</th><th>Location</th><th>Address</th><th>BluTag</th><th>BluTag<br>Temperature</th><th>Temperature</th><th>Humidity</th><th>Signal</th><th>Comments</th></tr></thead>
          <tbody>
            <tr><td>08 Sep 2022, 11:49 PM</td><td>33.89022,-117.96366</td><td>N/A</td><td class="c">80c138727834<br>06c138007834</td><td class="c">N/A<br>N/A</td><td>33.62</td><td>51.00</td><td>26</td><td class="note"><button aria-label="Edit comment"><svg width="12" height="12"><use href="#i-pencil"/></svg></button></td></tr>
            <tr><td>26 Jul 2022, 11:55 AM</td><td>N/A</td><td>N/A</td><td class="c">06c138007834<br>80c138727834</td><td class="c">23.12<br>23.12</td><td>24.23</td><td>44.00</td><td>17</td><td class="note"><button aria-label="Edit comment"><svg width="12" height="12"><use href="#i-pencil"/></svg></button></td></tr>
            <tr><td>26 Jul 2022, 11:50 AM</td><td>N/A</td><td>N/A</td><td class="c">06c138007834<br>80c138727834</td><td class="c">23.12<br>23.12</td><td>24.12</td><td>44.00</td><td>15</td><td class="note"><button aria-label="Edit comment"><svg width="12" height="12"><use href="#i-pencil"/></svg></button></td></tr>
            <tr><td>26 Jul 2022, 11:45 AM</td><td>N/A</td><td>N/A</td><td class="c">06c138007834<br>80c138727834</td><td class="c">23.12<br>23.12</td><td>24.19</td><td>44.00</td><td>15</td><td class="note"><button aria-label="Edit comment"><svg width="12" height="12"><use href="#i-pencil"/></svg></button></td></tr>
            <tr><td>26 Jul 2022, 11:40 AM</td><td>N/A</td><td>N/A</td><td class="c">06c138007834<br>80c138727834</td><td class="c">23.12<br>23.12</td><td>24.11</td><td>44.00</td><td>16</td><td class="note"><button aria-label="Edit comment"><svg width="12" height="12"><use href="#i-pencil"/></svg></button></td></tr>
            <tr><td>26 Jul 2022, 11:35 AM</td><td>N/A</td><td>N/A</td><td class="c">06c138007834<br>80c138727834</td><td class="c">23.33<br>24.14</td><td>24.00</td><td>44.00</td><td>17</td><td class="note"><button aria-label="Edit comment"><svg width="12" height="12"><use href="#i-pencil"/></svg></button></td></tr>
            <tr><td>26 Jul 2022, 11:30 AM</td><td>N/A</td><td>N/A</td><td class="c">06c138007834<br>80c138727834</td><td class="c">23.33<br>24.14</td><td>23.78</td><td>44.00</td><td>17</td><td class="note"><button aria-label="Edit comment"><svg width="12" height="12"><use href="#i-pencil"/></svg></button></td></tr>
            <tr><td>26 Jul 2022, 11:25 AM</td><td>N/A</td><td>N/A</td><td class="c">06c138007834<br>80c138727834</td><td class="c">23.33<br>24.14</td><td>23.78</td><td>44.00</td><td>15</td><td class="note"><button aria-label="Edit comment"><svg width="12" height="12"><use href="#i-pencil"/></svg></button></td></tr>
            <tr><td>26 Jul 2022, 11:20 AM</td><td>N/A</td><td>N/A</td><td class="c">06c138007834<br>80c138727834</td><td class="c">23.33<br>24.14</td><td>23.79</td><td>44.00</td><td>15</td><td class="note"><button aria-label="Edit comment"><svg width="12" height="12"><use href="#i-pencil"/></svg></button></td></tr>
            <tr><td>26 Jul 2022, 11:15 AM</td><td>N/A</td><td>N/A</td><td class="c">06c138007834<br>80c138727834</td><td class="c">23.33<br>24.14</td><td>23.80</td><td>44.00</td><td>17</td><td class="note"><button aria-label="Edit comment"><svg width="12" height="12"><use href="#i-pencil"/></svg></button></td></tr>
          </tbody>
        </table>
        <nav class="pager" aria-label="Pages">
          <button class="arrow off" disabled>«</button><button class="arrow off" disabled>‹</button><button class="current">1</button><button>2</button><button>3</button><button>4</button><button>5</button><button class="arrow">›</button><button class="arrow">»</button>
        </nav>
      </section>
    </main>

    <footer class="footer">
      <p class="powered"><em>Powered by</em> <a href="#">SmartAxiom</a></p>
      <p class="copy">Copyright © 2020 <a href="#">SmartAxiom</a>. All rights reserved.</p>
    </footer>
  </div>
</div>
<script src="charts.js"></script>
</body>
</html>
```
FILE: styles.css
```css
* { box-sizing: border-box; }
body { margin: 0; background: #f2f2f2; color: #212f3f; font: 14px/20px "Open Sans", sans-serif; }
h1, h2, p, ul { margin: 0; padding: 0; }
h1, h2 { font-weight: 600; }
b, th { font-weight: 700; }
a { color: #6495ed; }
button, input { font: inherit; }
button { cursor: pointer; border: 0; padding: 0; background: none; }
svg { display: block; }
.sprite { display: none; }

.topbar { display: flex; align-items: stretch; height: 55px; background: #fff; border-bottom: 1px solid #ececec; color: #1d57a8; font-size: 12px; }
.menu-btn { width: 54px; padding-left: 14px; }
.logo { display: flex; flex-direction: column; width: 125px; padding-top: 5px; text-decoration: none; }
.logo-name { font: 800 31px/30px Inter, sans-serif; color: #e96b22; }
.logo-by { font-size: 9px; line-height: 12px; color: #666; }
.top-cell { border-left: 1px solid #ececec; padding: 9px 15px 0; line-height: 19px; }
.top-cell.weather { width: 98px; }
.small { display: flex; align-items: center; font-size: 11px; }
.sun { margin-right: 8px; }
.user { margin-left: auto; padding-top: 10px; width: 201px; line-height: 18px; }
.user-name { font-weight: 700; font-size: 13px; }
.user-org { font-size: 11px; color: #6d93cf; }
.top-icon { display: flex; align-items: center; justify-content: center; width: 46px; border-left: 1px solid #ececec; padding-bottom: 4px; position: relative; }
.top-icon svg { fill: #1a56a8; }
.top-icon.wide { width: 56px; }
.top-icon.bell { width: 50px; }
.top-icon.power { width: 58px; border: 0; padding-right: 8px; }
.badge { position: absolute; left: 16px; top: 4px; width: 36px; border-radius: 10px; background: #689f38; color: #fff; font-weight: 600; line-height: 24px; text-align: center; }

.shell { display: flex; }
.sidebar { flex: none; width: 74px; background: #3294e6; }
.avatar-box { height: 75px; padding: 12px 9px 0; margin-bottom: 4px; background: linear-gradient(135deg, #2a5fae 0 24%, #2659a5 24% 40%, #2d63b1 40% 62%, #2558a4 62% 80%, #2f66b3 80%); }
.avatar { display: flex; align-items: center; justify-content: center; width: 56px; height: 56px; border: 2px solid #fff; border-radius: 50%; background: #333; }
.side-link { display: flex; align-items: center; justify-content: space-between; height: 44px; padding: 0 17px 0 14px; color: #fff; }
.side-link svg { fill: #fff; }
.content { flex: 1; min-width: 0; display: flex; flex-direction: column; }

.panel { margin: 24px 9px 30px; padding: 16px 16px 24px; background: #fff; border-radius: 16px; }
.filters { display: flex; align-items: center; height: 40px; padding: 0 7px; }
.filters h1 { margin-right: auto; padding-bottom: 4px; font-size: 16px; line-height: 24px; }
.filters label { margin: 0 8px; font-weight: 700; }
.date-field { display: flex; height: 40px; }
.date-field input { width: 183px; border: 1px solid #ced4da; border-right: 0; border-radius: 3px 0 0 3px; background: #fff; }
.date-field button { display: flex; align-items: center; justify-content: center; width: 38px; border-radius: 0 3px 3px 0; background: #2f96f3; color: #fff; }
.date-field.disabled input { border-color: #e2e6ea; }
.date-field.disabled button { background: #7cbdf8; }
.apply { width: 92px; height: 40px; margin-left: 8px; border-radius: 3px; background: #6eb5ef; color: #fff; }

.stats { display: grid; grid-template-columns: repeat(6, 1fr); gap: 15px; }
.stat { height: 80px; padding-top: 7px; text-align: center; border-radius: 3px; box-shadow: 0 2px 3px rgba(0, 0, 0, .08); }
.stat h2 { font-size: 13px; line-height: 20px; }
.stat p { display: flex; justify-content: center; align-items: center; font-size: 20px; font-weight: 600; line-height: 30px; margin-top: 5px; }
.edit-lg { fill: #3294e6; margin-right: 5px; }
.battery { margin-left: 13px; }
.wifi { margin: 0 0 6px 4px; }

.links { display: flex; justify-content: space-between; align-items: center; height: 55px; padding: 0 10px 3px; }
.report { font-size: 16px; }
.report svg { display: inline-block; vertical-align: -1px; fill: #6495ed; }

.card { margin-bottom: 16px; border-radius: 4px; box-shadow: 0 2px 5px rgba(0, 0, 0, .09); }
.card-head { display: flex; justify-content: space-between; background: #f1f0ef; border-bottom: 1px solid #dcdcdc; padding: 6px 9px 6px 8px; font-size: 14px; font-weight: 700; line-height: 20px; }
.card-head.plain { border-bottom: 0; padding-bottom: 7px; }
.status { font-size: 12px; font-weight: 600; line-height: 18px; }
.detail-row { display: grid; grid-template-columns: 1fr 1fr; padding: 7px 0 5px 12px; border-bottom: 1px solid #dcdcdc; }
.detail-row p:last-child:not(:first-child) { padding-left: 1px; }
.detail-row:last-child { border-bottom: 0; padding-bottom: 7px; }
.spacer-row { height: 12px; border-bottom: 1px solid #dcdcdc; }

.geofence { margin: 17px 8px 0; color: #3364ad; }
.map-card { padding: 5px 12px 6px; }
.map { width: 100%; height: auto; font-family: Roboto, sans-serif; }
.map text { text-anchor: middle; paint-order: stroke; stroke: #fff; stroke-width: 2px; stroke-linejoin: round; }
.dots circle { fill: #fff; stroke: #444; }
.park { font-size: 14px; fill: #3e8e4e; }
.park .it { font-style: italic; }
.region { font-size: 12px; font-weight: 500; fill: #808790; }
.state { font-size: 18px; font-weight: 500; fill: #666; }
.town { font-size: 12px; fill: #222; }
.city { font-size: 13px; font-weight: 500; fill: #222; }
.metro { font-size: 16px; font-weight: 500; fill: #111; }
.map .shields text { font-size: 9px; font-weight: 700; fill: #fff; stroke: none; }
.map .attrib text { font-size: 10px; fill: #111; text-anchor: start; stroke: none; }
.map .glogo { font: 600 18px "Open Sans", sans-serif; text-anchor: start; stroke-width: 1px; }

.summary, .events { margin-bottom: 20px; }
.summary-body { display: flex; align-items: stretch; }
.side-stats { flex: none; width: 295px; padding: 4px 0 4px 8px; border-right: 1px solid #dcdfe3; }
.side-stats ul { width: fit-content; list-style: none; }
.side-stats li { padding: 13px 20px 12px; border-bottom: 1px solid #dcdcdc; white-space: nowrap; }
.side-stats li:last-child { border-bottom: 0; }
.side-stats small { display: block; margin-top: 1px; font-size: 12px; line-height: 20px; color: #7b7f84; }
.chart { flex: 1; min-width: 0; height: auto; font-family: "Liberation Sans", Arial, sans-serif; }

.card.events { margin-bottom: 0; }
table { width: 100%; border-collapse: collapse; table-layout: fixed; border-left: 1px solid #dee2e6; }
col { width: 10%; }
col.wide { width: 20%; }
th { height: 55px; padding: 0 16px; background: #f1f0ef; border: 1px solid #dbdee6; text-align: left; font-size: 14px; line-height: 21px; }
td { height: 51px; padding: 0 16px; border-bottom: 1px solid #e6e6e6; font-size: 12px; line-height: 19px; color: #333; }
td.c { text-align: center; }
td.note { vertical-align: top; padding: 11px 20px; }
td.note svg { fill: #2f86e0; }
.pager { display: flex; gap: 4px; padding: 9px 18px 8px; }
.pager button { width: 29px; height: 26px; border: 1px solid #ddd; border-top: 0; background: #fff; color: #c4c4c4; font-size: 12px; line-height: 24px; }
.pager .arrow { width: 32px; color: #555; font-size: 14px; }
.pager .off { opacity: .5; color: #aaa; }
.pager .current { background: #3c84cc; border-color: #2f6fae; color: #fff; }

.footer { padding: 4px 25px; height: 44px; background: #e4e3e2; color: #222; }
.powered { font-size: 12px; line-height: 17px; }
.powered a { color: #2a6180; font-weight: 700; text-decoration: none; }
.copy { font-size: 9px; line-height: 14px; }
.copy a { color: #667; text-decoration: none; }
```
FILE: charts.js
```js
// Draws the four line charts. Series are lists of [index, value] keys with
// linear interpolation between them; "steps" are [lastIndex, value] runs.
const NS = 'http://www.w3.org/2000/svg';

function add(svg, tag, attrs, text) {
  const el = document.createElementNS(NS, tag);
  for (const k in attrs) el.setAttribute(k, attrs[k]);
  if (text) el.textContent = text;
  svg.appendChild(el);
}

function fromKeys(keys) {
  const out = [];
  for (let k = 0; k < keys.length - 1; k++) {
    const [a, va] = keys[k], [b, vb] = keys[k + 1];
    for (let i = a; i < b; i++) out.push(va + (vb - va) * (i - a) / (b - a));
  }
  out.push(keys[keys.length - 1][1]);
  return out;
}

function fromSteps(steps) {
  const out = [];
  for (const [last, v] of steps) while (out.length <= last) out.push(v);
  return out;
}

function smooth(p) {
  let d = `M${p[0][0]} ${p[0][1]}`;
  for (let i = 0; i < p.length - 1; i++) {
    const a = p[i - 1] || p[i], b = p[i], c = p[i + 1], e = p[i + 2] || c;
    d += `C${b[0] + (c[0] - a[0]) / 6} ${b[1] + (c[1] - a[1]) / 8} ${c[0] - (e[0] - b[0]) / 6} ${c[1] - (e[1] - b[1]) / 8} ${c[0]} ${c[1]}`;
  }
  return d;
}

function chart(id, o) {
  const svg = document.getElementById(id);
  const right = 1365, n = o.data.length;
  const X = i => o.left + (right - o.left) * i / (n - 1);
  const Y = v => o.top + (o.bottom - o.top) * (o.hi - v) / (o.hi - o.lo);
  const mid = (o.left + right) / 2;
  const line = (x1, y1, x2, y2, c, extra) => add(svg, 'line', Object.assign({ x1, y1, x2, y2, stroke: c }, extra));
  const crisp = y => Math.round(y) + 0.5;

  for (const v of o.grid) line(o.left, crisp(Y(v)), right, crisp(Y(v)), '#b8b8b8');
  line(o.left + 0.5, o.top, o.left + 0.5, o.bottom, '#222');
  line(o.left, crisp(Y(o.zero)), right, crisp(Y(o.zero)), '#222');
  o.labels.forEach((t, i) => {
    const x = X(i * o.every);
    line(x, crisp(Y(o.zero)), x, Y(o.zero) + 5, '#222');
    add(svg, 'text', { x, y: o.bottom + 16, 'font-size': 10, fill: '#444', 'text-anchor': 'middle' }, t);
  });
  add(svg, 'rect', { x: o.left, y: Y(o.max), width: right - o.left, height: Y(o.min) - Y(o.max), fill: o.band, 'fill-opacity': o.bandOpacity });
  for (const v of new Set([...o.grid, o.zero])) {
    if (v !== o.noLabel) add(svg, 'text', { x: o.left - 8, y: Y(v) + 2, 'font-size': 9, fill: '#444', 'text-anchor': 'end' }, v + (o.unit || ''));
  }

  for (const v of [o.max, o.min]) {
    line(o.left, crisp(Y(v)), right, crisp(Y(v)), o.limit, { 'stroke-dasharray': '4 4' });
    add(svg, 'circle', { cx: o.left, cy: crisp(Y(v)), r: 4.5, fill: o.limit });
  }
  add(svg, 'text', { x: mid, y: Y(o.max) - 7, 'font-size': 12, fill: o.limitText, 'text-anchor': 'middle' }, o.maxLabel);
  add(svg, 'text', { x: mid, y: Y(o.min) + 14, 'font-size': 12, fill: o.limitText, 'text-anchor': 'middle' }, o.minLabel);

  const pts = o.data.map((v, i) => [X(i), Y(v)]);
  add(svg, 'path', { d: smooth(pts), fill: 'none', stroke: o.color, 'stroke-width': 2 });
  pts.forEach(([cx, cy], i) => {
    if (o.allDots || i % o.every === 0) add(svg, 'circle', { cx, cy, r: 2.2, fill: '#fff', stroke: o.color });
  });

  const my = (o.top + o.bottom) / 2;
  add(svg, 'text', { x: o.left - 34, y: my, 'font-size': 11, fill: '#444', 'text-anchor': 'middle', transform: `rotate(-90 ${o.left - 34} ${my})` }, o.name);
  add(svg, 'text', { x: mid, y: o.bottom + o.dateGap, 'font-size': 11, fill: '#444', 'text-anchor': 'middle' }, 'Date');
}

const day1 = 'Mon Jul 25 2022 ', day2 = 'Tue Jul 26 2022 ';
const trackerLabels = [day1 + '12:01 pm', day1 + '2:27 pm', day1 + '3:21 pm', day2 + '12:30 am', day2 + '2:51 am', day2 + '5:02 am', day2 + '7:13 am', day2 + '9:24 am', day2 + '11:35 am'];
const tracker = { every: 26, labels: trackerLabels, band: '#f9f8f6', bandOpacity: 0, color: '#3398f0', limit: '#f39c12', limitText: '#f0a020' };
const tag = { unit: ' ºC', top: 24, bottom: 263, hi: 55, lo: -40, zero: 0, grid: [55, 40, 20, -20, -40], max: 45, min: -30, maxLabel: 'Max Temperature: 45 ºC', minLabel: 'Min Temperature: -30 ºC', band: '#fefef0', bandOpacity: 0.8, color: '#7ed321', limit: '#e8491f', limitText: '#e2483a', name: 'Temperature', left: 99, dateGap: 34, allDots: true };

// The tracker charts keep their grid above the tinted band.
function bandUnder(id, left, y, h) {
  add(document.getElementById(id), 'rect', { x: left, y, width: 1365 - left, height: h, fill: '#f9f8f7' });
}

bandUnder('chart-temp', 86, 57, 221);
chart('chart-temp', Object.assign({}, tracker, {
  left: 86, top: 28, bottom: 307, hi: 55, lo: -40, zero: 0, grid: [55, 40, 20, -20, -40], max: 45, min: -30,
  maxLabel: 'Max Temperature: 45 ºC', minLabel: 'Min Temperature: -30 ºC', name: 'Temperature', dateGap: 35,
  data: fromKeys([[0, 25.4], [1, 27], [2, 25.3], [7, 25.8], [8, 26.5], [9, 25.8], [10, 27.8], [11, 29.5], [12, 32], [13, 29], [18, 28], [19, 28.2], [22, 27.5], [26, 27.2], [28, 28.1], [30, 27.3], [32, 27], [36, 27.8], [38, 28.8], [39, 29.5], [41, 29.2], [43, 29.2], [47, 29.7], [49, 29.8], [50, 30.6], [52, 31.5], [53, 33], [56, 33.5], [57, 34.27], [58, 26.5], [59, 27.2], [60, 26], [63, 22.7], [65, 22], [66, 18.7], [67, 17.7], [68, 22.8], [69, 22.4], [74, 22.6], [76, 23], [80, 23.2], [81, 23.9], [83, 23.7], [88, 23.7], [91, 24.2], [92, 24], [98, 24], [101, 24.2], [102, 25.3], [107, 25.2], [116, 25.4], [117, 25.9], [121, 25.9], [123, 25.7], [130, 25.6], [134, 26.1], [136, 25.9], [140, 26.1], [144, 25.9], [146, 26.4], [151, 26.4], [156, 27], [159, 26.6], [166, 26.1], [171, 25.4], [174, 25.4], [177, 25], [184, 24.9], [191, 24.3], [198, 24.3], [207, 24], [208, 24.3], [212, 24.2], [213, 33.6]])
}));

bandUnder('chart-hum', 83, 52, 163);
chart('chart-hum', Object.assign({}, tracker, {
  left: 83, top: 24, bottom: 262, hi: 61, lo: 10, zero: 10, noLabel: 61, grid: [61, 60, 50, 40, 30, 20], max: 55, min: 20,
  maxLabel: 'Max Relative humidity (RH): 55 %', minLabel: 'Min Relative humidity (RH): 20 %', name: 'Humidity', dateGap: 34,
  data: fromKeys([[0, 45], [1, 46], [2, 45], [6, 45], [7, 46], [8, 46], [9, 45], [10, 47], [11, 48], [12, 50], [13, 48], [14, 47], [22, 47], [23, 46], [26, 46], [27, 47], [28, 47], [29, 46], [34, 46], [35, 47], [38, 47], [39, 48], [49, 48], [50, 49], [52, 49], [53, 50], [54, 50], [55, 51], [57, 51], [58, 46], [60, 46], [63, 43], [64, 43], [65, 42], [66, 40], [67, 40], [68, 43], [79, 43], [80, 44], [101, 44], [102, 45], [137, 45], [138, 46], [139, 45], [140, 46], [141, 45], [144, 45], [145, 46], [146, 46], [147, 45], [148, 46], [162, 46], [163, 45], [184, 45], [185, 44], [212, 44], [213, 51]])
}));

chart('chart-tag1', Object.assign({}, tag, {
  every: 25, labels: [day1 + '1:18 pm', day1 + '2:31 pm', day1 + '3:25 pm', day2 + '1:21 am', day2 + '3:37 am', day2 + '5:42 am', day2 + '7:48 am', day2 + '9:54 am'],
  data: fromSteps([[1, 23.3], [8, 24.3], [10, 14.65], [18, 20.8], [21, 22.1], [27, 21.4], [29, 22.4], [54, 21.3], [82, 22.3], [99, 23.5], [135, 25.5], [158, 26.5], [195, 24.3], [199, 23.3]])
}));

chart('chart-tag2', Object.assign({}, tag, {
  every: 20, labels: [day1 + '1:14 pm', day1 + '2:37 pm', day1 + '3:19 pm', day2 + '2:51 am', day2 + '4:32 am', day2 + '6:13 am', day2 + '7:53 am', day2 + '9:34 am', day2 + '11:15 am'],
  data: fromSteps([[2, 23.2], [9, 23.8], [10, 23.2], [13, 22.1], [15, 21.3], [21, 22.3], [29, 21.14], [51, 22.2], [76, 23.3], [83, 25.3], [101, 25.1], [104, 25.7], [133, 26.1], [164, 23.1], [168, 23]])
}));
```
